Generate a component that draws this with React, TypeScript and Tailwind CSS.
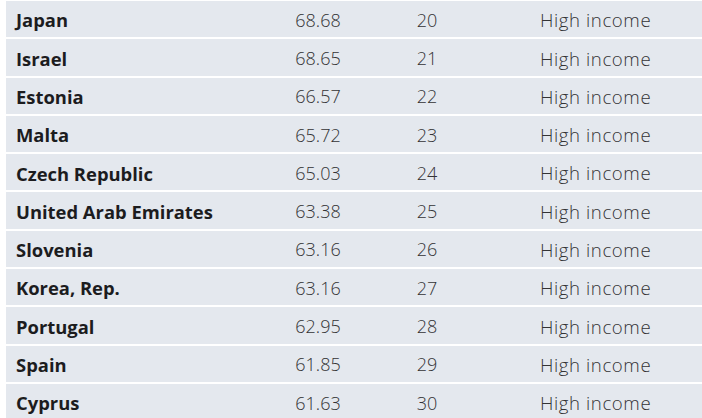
const rows = [
  { name: 'Japan', score: '68.68', rank: 20 },
  { name: 'Israel', score: '68.65', rank: 21 },
  { name: 'Estonia', score: '66.57', rank: 22 },
  { name: 'Malta', score: '65.72', rank: 23 },
  { name: 'Czech Republic', score: '65.03', rank: 24 },
  { name: 'United Arab Emirates', score: '63.38', rank: 25 },
  { name: 'Slovenia', score: '63.16', rank: 26 },
  { name: 'Korea, Rep.', score: '63.16', rank: 27 },
  { name: 'Portugal', score: '62.95', rank: 28 },
  { name: 'Spain', score: '61.85', rank: 29 },
  { name: 'Cyprus', score: '61.63', rank: 30 },
];

export default function App() {
  return (
    <div
      className="w-[702px] h-[418px] overflow-hidden bg-white pl-[6px] pt-[1px] flex flex-col gap-[2px]"
      style={{ fontFamily: '"Open Sans", "Noto Sans", sans-serif' }}
    >
      {rows.map((r) => (
        <div key={r.name} className="flex items-center h-[36.3px] shrink-0 pt-[2px] bg-[#e4e8ee] text-[18px]">
          <div className="w-[252px] pl-[10px] font-bold text-[18.4px] text-[#1c1c1e]">{r.name}</div>
          <div className="w-[120px] text-center font-light text-[#333335]">{r.score}</div>
          <div className="w-[98px] text-center font-light text-[#333335]">{r.rank}</div>
          <div className="pl-[64px] font-light text-[18.6px] tracking-[0.6px] text-[#333335]">High income</div>
        </div>
      ))}
    </div>
  );
}
